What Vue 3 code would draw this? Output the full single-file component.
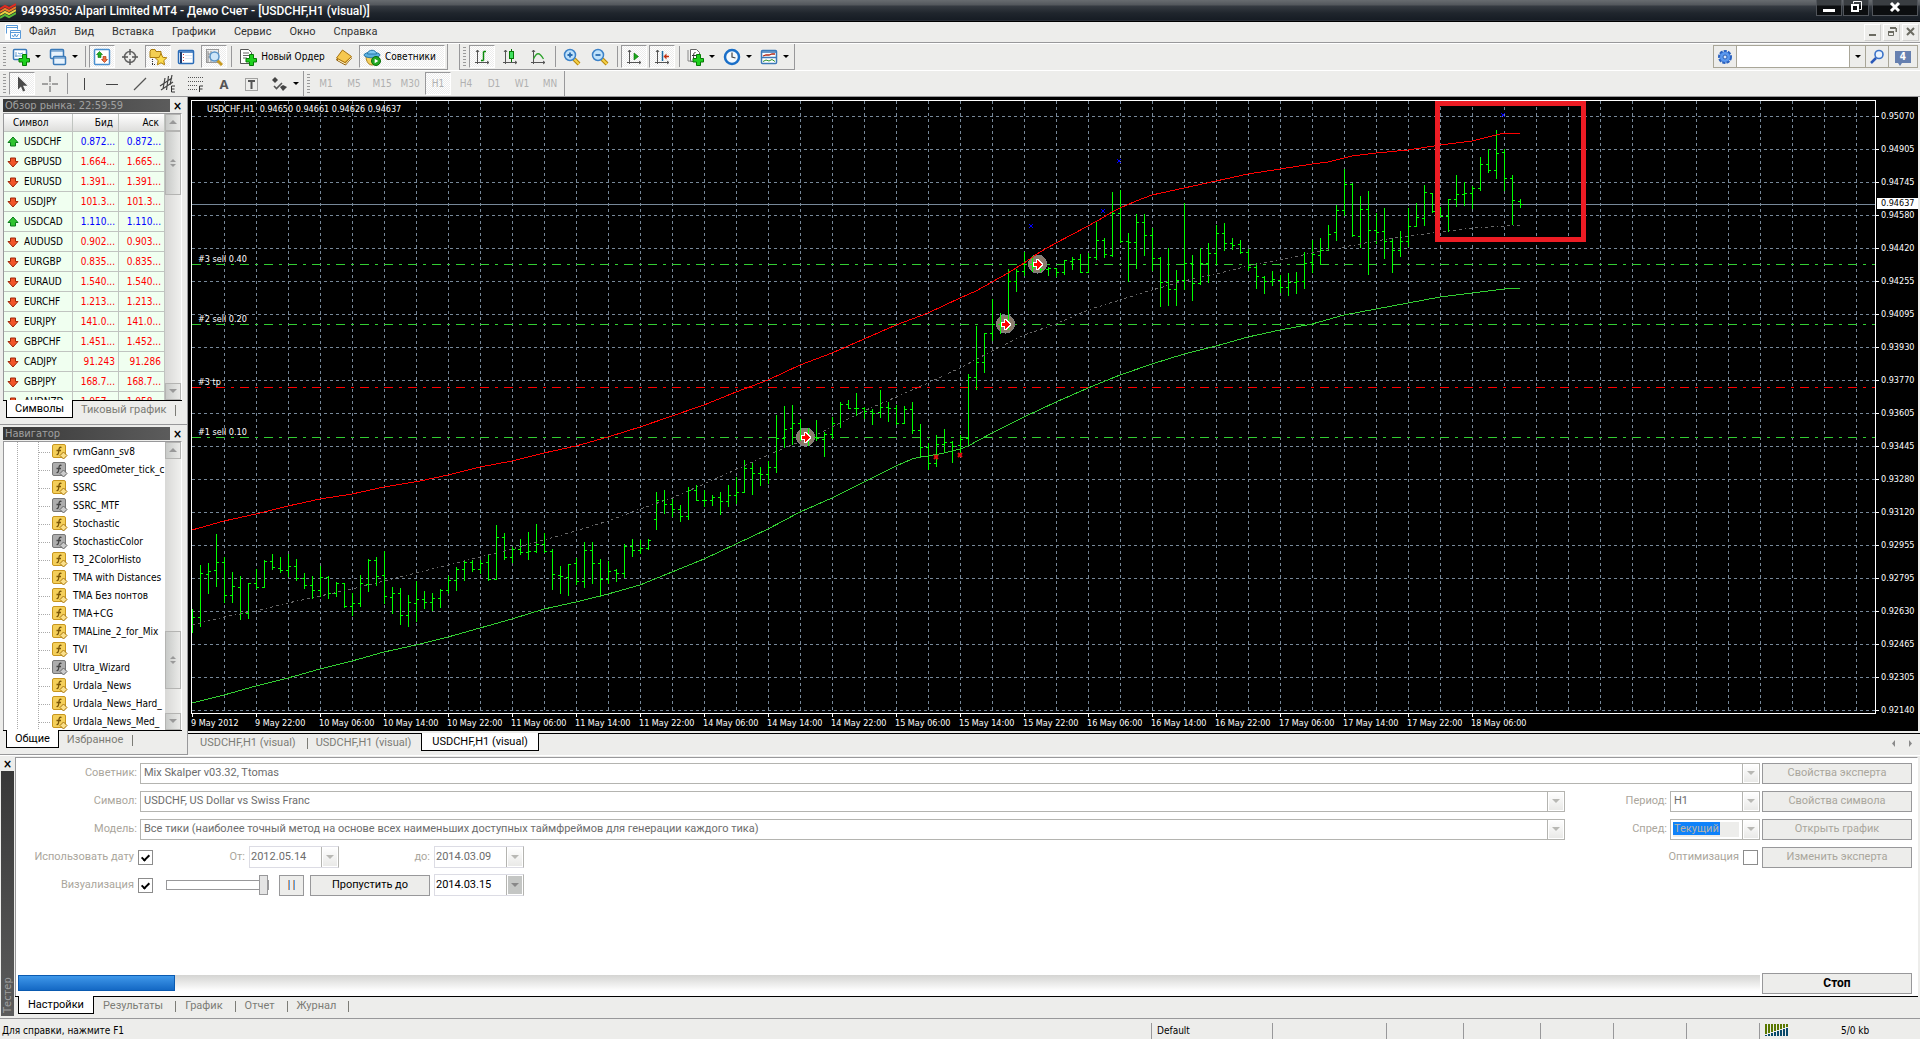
<script setup>
import { computed } from 'vue'

/* ---------- icon shapes, drawn on an 18 x 18 field ---------- */
const plus = '<path d="M10.5 6.5h4v4h3v3.500h-3v3.500h-4v-3.500h-3.500v-3.500h3.500z" fill="#1fd01f" stroke="#067a06"/>'
const axes = '<path d="M4.500 2v14M2 14.500h14M3 4l1.500-2L6 4M14 13l2 1.500-2 1.500" fill="none" stroke="#555"/>'
const lens = (sign) =>
  `<path d="M11 11l5 5" stroke="#b8860b" stroke-width="4"/><path d="M11 11l5 5" stroke="#f5d24a" stroke-width="2"/><circle cx="7" cy="7" r="5.500" fill="#bfe2fb" stroke="#3c82c8" stroke-width="1.500"/><path d="${sign}" stroke="#2a6cb0" stroke-width="1.800"/>`
const icons = {
  newChart: '<rect x="1.500" y="1.500" width="13" height="10" rx="1" fill="#fff" stroke="#3a7ab8" stroke-width="1.500"/><path d="M4 4v5M3 8h9M6 5l2 1 3-1" stroke="#6aa0d0" fill="none"/>' + plus,
  profiles: '<rect x="1.500" y="1.500" width="13" height="9" rx="1" fill="#e8f3fc" stroke="#3a7ab8" stroke-width="1.500"/><path d="M2 3h12" stroke="#3a7ab8"/><rect x="4.500" y="8.500" width="12" height="8" rx="1" fill="#e8f3fc" stroke="#3a7ab8" stroke-width="1.500"/><path d="M5 10h11" stroke="#3a7ab8"/>',
  market: '<rect x="1.500" y="1.500" width="15" height="15" rx="1" fill="#fff" stroke="#4a90d0" stroke-width="1.500"/><path d="M6.500 3.500l3 3h-1.500v3h-3v-3h-1.500z" fill="#20b020" stroke="#0a700a" stroke-width=".6"/><path d="M11.500 14.500l3-3h-1.500v-3h-3v3h-1.500z" fill="#f07040" stroke="#a02a00" stroke-width=".6"/>',
  target: '<circle cx="9" cy="9" r="5.500" fill="none" stroke="#666" stroke-width="1.500"/><path d="M9 1v6M9 11v6M1 9h6M11 9h6" stroke="#555" stroke-width="1.400"/>',
  star: '<path d="M1 3.500l1-2h4l1 2h5v6H1z" fill="#f3cf52" stroke="#a87c12"/><path d="M3.500 11v6M3 16.500h4" stroke="#333" stroke-dasharray="1 1"/><path d="M12 5.500l1.800 3.800 4 .5-3 2.800.8 4.200L12 14.800 8.400 16.800l.8-4.200-3-2.800 4-.5z" fill="#fbdc4e" stroke="#b07f0c"/>',
  terminal: '<rect x="1.500" y="2.500" width="15" height="13" rx="1" fill="#fff" stroke="#2a6cb8" stroke-width="1.500"/><path d="M2 4h14" stroke="#2a6cb8" stroke-width="1.500"/><path d="M4 4v11" stroke="#1a3c70" stroke-width="2"/><path d="M6.500 6v8" stroke="#c33" stroke-dasharray="1 2"/><path d="M8 7.500h7M8 10.500h7" stroke="#dde8f4"/>',
  tester: '<rect x="1.500" y="1.500" width="12" height="13" fill="#eee" stroke="#999"/><path d="M3 3v11M6 3v11M3 6h9M3 9h9" stroke="#888" fill="none"/><path d="M12 12l5 5" stroke="#c89a20" stroke-width="3"/><circle cx="9.500" cy="8.500" r="4.500" fill="#cfe6f8" stroke="#5a94c8" stroke-width="1.500"/>',
  order: '<path d="M1.500 1.500h8l3 3v11h-11z" fill="#fff" stroke="#555"/><path d="M4 5h6M4 7.500h6M4 10h4" stroke="#666"/>' + plus,
  book: '<path d="M1.500 12L7 3.500l9.500 6.500-6 7z" fill="#c88a18" stroke="#8a5a08"/><path d="M1.500 10L7.500 2l9 6.500-6.500 6z" fill="#f6c850" stroke="#a87412"/><path d="M3 12l7.500 4 5.500-6" stroke="#fff3c8" fill="none"/>',
  expert: '<path d="M3 8c0 6 3 9 6 9s6-3 6-9z" fill="#f6d060" stroke="#a8801a"/><ellipse cx="9" cy="7" rx="8" ry="2.800" fill="#5ab0e0" stroke="#2a78a8"/><path d="M4.500 6c0-5 9-5 9 0z" fill="#7cc8f0" stroke="#2a78a8"/><circle cx="13" cy="13" r="4.500" fill="#22a822" stroke="#0a700a"/><path d="M11.700 10.700v4.600l3.600-2.300z" fill="#fff"/>',
  bars: axes + '<path d="M10.500 3.500v9M10.500 3.500h2.500M8 12.500h2.500" stroke="#0a8a0a" stroke-width="1.500" fill="none"/>',
  candles: axes + '<path d="M10.500 1v13" stroke="#067006"/><rect x="8.500" y="3.500" width="4" height="7" fill="#3fe05f" stroke="#067a06"/>',
  line: axes + '<path d="M4.500 11c3-7 6-7 10 0" stroke="#2aa22a" stroke-width="1.300" fill="none"/>',
  zoomIn: lens('M4.500 7h5M7 4.500v5'),
  zoomOut: lens('M4.500 7h5'),
  scroll: axes + '<path d="M9 5l4.500 3.500L9 12z" fill="#18a818" stroke="#067006" stroke-width=".6"/>',
  shift: axes + '<path d="M9.500 3v10" stroke="#1a6aa0" stroke-width="1.500"/><path d="M16 8.500h-4" stroke="#c03010" stroke-width="1.500"/><path d="M13.500 5.500l-3 3 3 3z" fill="#c03010"/>',
  indicator: '<path d="M4.500 1.500h6l3 3v9h-9z" fill="#fff" stroke="#666"/><path d="M2 2v11h4" fill="none" stroke="#888"/><path d="M9.500 4.500c-2 0-2 1.500-2 8M6 7.500h4" stroke="#333" fill="none"/>' + plus,
  clock: '<circle cx="9" cy="9" r="7" fill="#f4f9fd" stroke="#1a6fc8" stroke-width="2.500"/><path d="M9 4.500V9l3.500 1" stroke="#444" fill="none" stroke-width="1.200"/>',
  template: '<rect x="1.500" y="2.500" width="15" height="13" rx="1" fill="#fff" stroke="#3a78b8" stroke-width="1.500"/><path d="M2 4h14M2 9.500h14" stroke="#3a78b8" stroke-width="1.500"/><path d="M3 8l3-1 3 0 3-1 3 0" stroke="#b02a1a" fill="none" stroke-width="1.300"/><path d="M3 13.500l3-1.500 3 1 3-1.500 3 2" stroke="#2a902a" fill="none"/>',
  cursor: '<path d="M5 1.500v13l3-3 2 5 2.200-1-2.200-4.700h4.500z" fill="#4a4a4a"/>',
  cross: '<path d="M9 1v6M9 11v6M1 9h6M11 9h6" stroke="#555"/><path d="M8.500 8.500h1v1h-1z" fill="#555"/>',
  vline: '<path d="M9.500 3v12" stroke="#444"/>',
  hline: '<path d="M3 9.500h12" stroke="#444"/>',
  trend: '<path d="M3 15L15 3" stroke="#555" stroke-width="1.300"/>',
  channel: '<path d="M1 11l12-8M2 15l12-8M6 3l-2 11M9.500 1l-2 14M13 0l-2 10" stroke="#444" stroke-width="1.200"/><path d="M16 11h-3.500v6h3.500M12.500 14h3" stroke="#333" fill="none"/>',
  fibo: '<path d="M1 2.500h15M1 6.500h15M1 10.500h9M1 14.500h9" stroke="#555" stroke-dasharray="1 1"/><path d="M16 11h-3.500v6M12.500 14h3" stroke="#333" fill="none"/>',
  letterBox: '<rect x="2.500" y="3.500" width="12" height="12" fill="none" stroke="#555" stroke-dasharray="1 1"/><path d="M5 6h7M8.500 6v8" stroke="#555" stroke-width="2"/>',
  arrows: '<path d="M2 5l3-3 3 3-3 3z" fill="#444"/><path d="M10 12l3-2 4 2-4 4z" fill="#444"/><path d="M4 11l2.500 2.500L12 8" stroke="#555" stroke-width="1.600" fill="none"/>',
}

const menu = ['Файл', 'Вид', 'Вставка', 'Графики', 'Сервис', 'Окно', 'Справка']

const standardBar = [
  { icon: 'newChart', drop: true },
  { icon: 'profiles', drop: true },
  { sep: true },
  { icon: 'market', on: true },
  { icon: 'target' },
  { icon: 'star', on: true },
  { icon: 'terminal' },
  { icon: 'tester', on: true },
  { sep: true },
  { icon: 'order', label: 'Новый Ордер' },
  { icon: 'book' },
  { icon: 'expert', label: 'Советники', on: true },
]
const chartBar = [
  { icon: 'bars', on: true },
  { icon: 'candles' },
  { icon: 'line' },
  { sep: true },
  { icon: 'zoomIn' },
  { icon: 'zoomOut' },
  { sep: true },
  { icon: 'scroll', on: true },
  { icon: 'shift', on: true },
  { sep: true },
  { icon: 'indicator', drop: true },
  { icon: 'clock', drop: true },
  { icon: 'template', drop: true },
]
const drawBar = [
  { icon: 'cursor', on: true },
  { icon: 'cross' },
  { sep: true },
  { icon: 'vline' },
  { icon: 'hline' },
  { icon: 'trend' },
  { icon: 'channel' },
  { icon: 'fibo' },
  { glyph: 'A' },
  { icon: 'letterBox' },
  { icon: 'arrows', drop: true },
]
const periodBar = ['M1', 'M5', 'M15', 'M30', 'H1', 'H4', 'D1', 'W1', 'MN'].map((p) => ({ period: p, on: p === 'H1' }))
const topBars = [standardBar, chartBar]
const lowBars = [drawBar, periodBar]

const quotes = [
  ['USDCHF', '0.872...', '0.872...', true],
  ['GBPUSD', '1.664...', '1.665...', false],
  ['EURUSD', '1.391...', '1.391...', false],
  ['USDJPY', '101.3...', '101.3...', false],
  ['USDCAD', '1.110...', '1.110...', true],
  ['AUDUSD', '0.902...', '0.903...', false],
  ['EURGBP', '0.835...', '0.835...', false],
  ['EURAUD', '1.540...', '1.540...', false],
  ['EURCHF', '1.213...', '1.213...', false],
  ['EURJPY', '141.0...', '141.0...', false],
  ['GBPCHF', '1.451...', '1.452...', false],
  ['CADJPY', '91.243', '91.286', false],
  ['GBPJPY', '168.7...', '168.7...', false],
  ['AUDNZD', '1.057...', '1.058...', false],
]

const indicators = [
  ['rvmGann_sv8', 1], ['speedOmeter_tick_c', 0], ['SSRC', 1], ['SSRC_MTF', 0],
  ['Stochastic', 1], ['StochasticColor', 0], ['T3_2ColorHisto', 1], ['TMA with Distances', 1],
  ['TMA Без понтов', 1], ['TMA+CG', 1], ['TMALine_2_for_Mix', 1], ['TVI', 1],
  ['Ultra_Wizard', 0], ['Urdala_News', 1], ['Urdala_News_Hard_', 1], ['Urdala_News_Med_', 1],
]

const prices = [
  '0.95070', '0.94905', '0.94745', '0.94580', '0.94420', '0.94255', '0.94095', '0.93930', '0.93770', '0.93605',
  '0.93445', '0.93280', '0.93120', '0.92955', '0.92795', '0.92630', '0.92465', '0.92305', '0.92140',
]
const times = [
  '9 May 2012', '9 May 22:00', '10 May 06:00', '10 May 14:00', '10 May 22:00', '11 May 06:00', '11 May 14:00',
  '11 May 22:00', '14 May 06:00', '14 May 14:00', '14 May 22:00', '15 May 06:00', '15 May 14:00', '15 May 22:00',
  '16 May 06:00', '16 May 14:00', '16 May 22:00', '17 May 06:00', '17 May 14:00', '17 May 22:00', '18 May 06:00',
]

/* ---------- chart series: high, low, open, close for each hour ---------- */
const LEFT = 192
const TOP = 101
const STEP = 8
const ohlc = `609 632 617 617|565 626 617 573|563 593 574 571|534 586 570 562|557 602 562 595|572 602 595 586|576 619 587 613|583 618 613 583
569 588 583 587|560 587 587 561|554 569 561 567|557 572 568 570|554 576 570 566|559 580 566 578|573 588 578 585|576 598 585 590
566 596 590 577|576 598 577 593|582 596 593 583|583 607 583 606|593 615 606 603|575 606 603 583|559 591 584 560|557 585 560 576
551 603 575 596|587 613 597 593|588 624 593 615|595 626 615 602|581 621 603 599|591 608 599 602|593 610 602 598|589 607 598 590
576 593 590 580|567 590 580 569|561 580 569 562|560 571 562 569|560 573 569 563|554 580 562 579|525 579 579 537|533 559 537 557
547 562 557 549|539 554 549 552|532 559 552 551|524 552 551 544|533 552 544 551|549 589 551 574|566 593 575 576|564 595 577 564
558 584 563 581|542 587 581 550|542 583 550 563|559 596 563 579|561 583 579 571|569 581 570 573|544 577 573 546|539 556 546 550
540 553 550 548|539 549 548 540|492 529 519 500|490 513 500 504|499 516 504 509|505 521 509 516|487 519 516 490|485 500 490 500
490 506 500 500|495 505 500 497|492 514 497 501|485 506 501 495|477 503 495 492|460 492 492 468|463 494 468 473|467 485 473 474
461 483 474 467|415 472 467 438|406 447 438 429|405 444 428 423|419 440 423 437|428 445 437 437|420 440 437 438|432 456 439 434
417 438 434 423|402 427 423 404|400 408 404 408|393 415 408 408|407 418 408 411|409 424 411 413|390 417 412 407|402 421 407 408
405 424 408 423|406 423 423 409|402 433 409 430|424 457 430 447|443 469 447 463|435 466 463 444|429 451 444 442|441 462 442 446
435 452 445 439|374 444 438 377|326 389 377 362|333 372 362 333|299 340 333 324|313 333 324 324|269 329 324 281|269 291 281 271
252 275 271 264|256 271 264 267|264 271 267 269|267 275 269 268|268 276 268 272|260 274 272 260|257 269 261 259|254 272 259 272
253 272 272 257|221 259 257 240|238 257 240 254|192 256 255 213|190 242 213 241|233 281 241 242|214 268 242 222|214 255 222 235
228 270 235 258|257 306 258 282|248 305 282 289|270 305 289 280|203 289 280 263|255 300 263 283|248 284 283 263|243 282 263 253
225 264 253 233|223 250 233 243|238 249 243 245|240 253 244 252|249 270 252 267|263 288 267 276|276 293 277 281|271 285 281 279
275 292 280 287|273 295 287 282|272 293 282 281|252 288 281 263|240 272 262 254|238 264 255 250|225 250 250 234|205 240 232 210
169 215 210 184|183 236 184 235|196 247 236 209|191 274 209 230|213 243 230 232|208 258 231 241|239 272 241 250|231 256 250 241
208 246 241 226|203 226 226 217|185 225 218 192|193 212 193 211|207 216 211 216|199 231 216 199|175 206 199 194|182 205 194 193
186 208 193 188|157 190 188 164|149 172 164 170|130 178 170 153|149 190 152 178|175 224 178 200|199 207 201 204`
const barPath = computed(() =>
  ohlc
    .split(/[|\n]/)
    .map((row, i) => {
      const [h, l, o, c] = row.split(' ').map(Number)
      const x = LEFT + i * STEP
      return `M${x} ${h}h1V${l + 1}h-1zM${x - 2} ${o}h2v1h-2zM${x + 1} ${c}h2v1h-2z`
    })
    .join('')
)
const upper = '192,530 224,521 256,514 288,506 320,499 352,494 384,487 420,481 448,475 480,467 512,461 544,453 576,446 608,437 640,427 672,416 704,405 736,392 768,380 800,365 832,353 864,339 896,325 928,313 960,298 976,291 992,282 1008,273 1024,263 1040,252 1056,243 1088,226 1104,217 1112,212 1120,208 1136,201 1152,195 1184,188 1216,181 1248,174 1280,169 1312,164 1328,162 1344,158 1352,156 1376,153 1408,150 1440,145 1472,141 1488,137 1500,134 1504,133 1520,133'
const lower = '192,703 224,695 256,686 288,678 320,669 352,661 384,652 416,645 448,637 480,628 512,619 544,609 576,602 608,594 640,585 672,572 704,559 736,544 768,529 800,512 832,498 864,482 896,466 912,459 920,457 928,456 944,453 952,451 960,449 968,446 992,433 1024,417 1056,402 1088,388 1120,375 1152,364 1168,359 1184,354 1216,346 1248,337 1280,330 1312,324 1344,315 1376,309 1408,303 1440,297 1472,293 1504,289 1520,288'
const middle = '192,625 224,617 256,611 288,603 320,596 352,589 384,581 416,573 448,565 480,557 512,549 544,540 576,531 608,521 640,509 672,498 704,484 768,455 816,435 832,427 864,411 896,397 928,383 960,368 992,351 1024,335 1056,324 1088,310 1120,300 1152,290 1184,281 1216,274 1248,266 1280,260 1312,253 1344,247 1376,241 1408,236 1440,232 1472,228 1504,226 1520,225'

const orders = [
  { y: 264, text: '#3 sell 0.40', tp: false },
  { y: 324, text: '#2 sell 0.20', tp: false },
  { y: 387, text: '#3 tp', tp: true },
  { y: 437, text: '#1 sell 0.10', tp: false },
]
const entries = [[1037, 264], [1005, 324], [805, 437]]
const blueMarks = [[1031, 226], [1103, 211], [1119, 161], [1503, 115]]
const redMarks = [[936, 457], [960, 455]]

const chartTabs = ['USDCHF,H1 (visual)', 'USDCHF,H1 (visual)', 'USDCHF,H1 (visual)']
const testerTabs = ['Настройки', 'Результаты', 'График', 'Отчет', 'Журнал']
</script>

<template>
  <div class="app">
    <header class="titlebar">
      <svg class="logo" width="16" height="16" viewBox="0 0 16 16" fill="none" stroke-width="2">
        <path d="M0 6l5-3 4 2 7-4" stroke="#e02a20" />
        <path d="M0 9l5-3 4 2 7-4" stroke="#f07a28" />
        <path d="M0 12l5-3 4 2 7-4" stroke="#e8d040" />
        <path d="M0 15l5-3 4 2 7-4" stroke="#58b838" />
      </svg>
      <h1>9499350: Alpari Limited MT4 - Демо Счет - [USDCHF,H1 (visual)]</h1>
      <div class="winbtns">
        <button aria-label="Свернуть"><svg width="12" height="12"><path d="M0 8h12v3H0z" fill="#fff" /></svg></button>
        <button aria-label="Восстановить">
          <svg width="12" height="12" fill="none" stroke="#fff"><path d="M3.500 2.500v-2h8v8h-2" /><path d="M2 4h6v6H2z" stroke-width="2" /></svg>
        </button>
        <button class="close" aria-label="Закрыть"><svg width="12" height="12"><path d="M2 2l8 8M10 2l-8 8" stroke="#fff" stroke-width="3" /></svg></button>
      </div>
    </header>

    <nav class="menubar">
      <svg width="16" height="16" viewBox="0 0 16 16">
        <path d="M0 0h16v16H0z" fill="#fff" />
        <path d="M1.500 9.500v-8h11v4M1 3.500h12M5.500 6.500h10v8h-10zM5 8.500h11" fill="none" stroke="#5a9ad8" />
        <path d="M7 11l1.500 2L10 10l1.500 3 2-3" fill="none" stroke="#5a9ad8" />
      </svg>
      <a v-for="m in menu" :key="m" href="#">{{ m }}</a>
      <div class="mdi">
        <button aria-label="Свернуть окно"><svg width="10" height="10"><path d="M1 7h7v2H1z" fill="#6b6b62" /></svg></button>
        <button aria-label="Восстановить окно"><svg width="10" height="10" fill="none" stroke="#6b6b62"><path d="M3 1h6M9.500 1v4M1 5h6" stroke-width="2" /><path d="M1.500 4.500h5v4h-5z" /></svg></button>
        <button aria-label="Закрыть окно"><svg width="10" height="10"><path d="M1 1l7 7M8 1L1 8" stroke="#6b6b62" stroke-width="2" /></svg></button>
      </div>
    </nav>

    <div v-for="(bars, r) in [topBars, lowBars]" :key="r" class="toolrow" :class="{ second: r === 1 }">
      <div v-for="(bar, b) in bars" :key="b" class="toolbar" role="toolbar">
        <i class="grip"></i>
        <template v-for="(t, i) in bar" :key="i">
          <i v-if="t.sep" class="sep"></i>
          <button v-else class="tool" :class="{ on: t.on, drop: t.drop, wide: t.label }" :aria-label="t.label || t.period || t.glyph || t.icon">
            <svg v-if="t.icon" width="18" height="18" viewBox="0 0 18 18" v-html="icons[t.icon]"></svg>
            <span v-if="t.label">{{ t.label }}</span>
            <b v-if="t.glyph">{{ t.glyph }}</b>
            <span v-if="t.period" class="period">{{ t.period }}</span>
            <i v-if="t.drop" class="caret"></i>
          </button>
        </template>
      </div>
      <form v-if="r === 0" class="search" @submit.prevent>
        <button aria-label="Настройки поиска">
          <svg width="16" height="16" viewBox="0 0 16 16">
            <circle cx="8" cy="8" r="5.500" fill="#3a7ad8" stroke="#2a62c0" stroke-width="3" stroke-dasharray="3 1" />
            <circle cx="8" cy="8" r="5" fill="#5a98ee" /><circle cx="8" cy="8" r="2" fill="#dce9fb" stroke="#2a5cb0" />
          </svg>
        </button>
        <input type="text" aria-label="Поиск" />
        <button class="narrow" aria-label="Список"><i class="caret"></i></button>
        <button aria-label="Найти">
          <svg width="15" height="15" viewBox="0 0 15 15" fill="none"><circle cx="9" cy="5.500" r="4" fill="#eaf3fe" stroke="#3a72c8" stroke-width="1.600" /><path d="M6 9l-5 5" stroke="#2a58b8" stroke-width="2.500" /></svg>
        </button>
        <button class="chat" aria-label="Сообщения"><span>4</span></button>
      </form>
    </div>

    <main class="work">
      <aside class="side">
        <section class="panel market">
          <header class="cap"><h2>Обзор рынка: 22:59:59</h2><button aria-label="Закрыть панель">×</button></header>
          <div class="scrollbox">
            <div class="view">
              <table>
                <thead>
                  <tr><th class="sym">Символ</th><th>Бид</th><th>Аск</th></tr>
                </thead>
                <tbody>
                  <tr v-for="q in quotes" :key="q[0]" :class="q[3] ? 'up' : 'down'">
                    <td class="sym">
                      <svg width="12" height="12" viewBox="0 0 12 12">
                        <path v-if="q[3]" d="M6 1l5 5.500H8.500V10h-5V6.500H1z" fill="#2fc42f" stroke="#0a7a1a" />
                        <path v-else d="M6 11L1 5.500h2.500V2h5v3.500H11z" fill="#f0562a" stroke="#a02808" />
                      </svg>{{ q[0] }}
                    </td>
                    <td>{{ q[1] }}</td>
                    <td>{{ q[2] }}</td>
                  </tr>
                </tbody>
              </table>
            </div>
            <div class="vscroll">
              <i class="arrow up"></i><i class="thumb first"></i><i class="track"></i><i class="arrow dn"></i>
            </div>
          </div>
          <div class="tabs"><button class="active">Символы</button><button>Тиковый график</button></div>
        </section>

        <section class="panel navigator">
          <header class="cap"><h2>Навигатор</h2><button aria-label="Закрыть панель">×</button></header>
          <div class="scrollbox">
            <ul class="view tree">
              <li v-for="n in indicators" :key="n[0]">
                <svg width="16" height="16" viewBox="0 0 16 16">
                  <rect x=".5" y=".5" width="13" height="13" rx="1.500" :fill="n[1] ? '#f4cf5a' : '#adadad'" :stroke="n[1] ? '#c8961e' : '#777'" />
                  <path d="M9.500 3.500c-2-1-2.500 1-2.700 3.500S6 11 4.500 10.500M4.500 6.500h4.500" fill="none" :stroke="n[1] ? '#7a5608' : '#444'" stroke-width="1.300" />
                  <path d="M11.500 8l3.500 3.500-3.500 3.500L8 11.500z" :fill="n[1] ? '#fbe08a' : '#ccc'" :stroke="n[1] ? '#a87610' : '#666'" />
                </svg>
                <span>{{ n[0] }}</span>
              </li>
            </ul>
            <div class="vscroll">
              <i class="arrow up"></i><i class="track"></i><i class="thumb second"></i><i class="track short"></i><i class="arrow dn"></i>
            </div>
          </div>
          <div class="tabs"><button class="active">Общие</button><button>Избранное</button></div>
        </section>
      </aside>

      <section class="charts">
        <div class="chart">
          <div class="plot">
            <svg width="100%" height="100%" shape-rendering="crispEdges">
              <g :transform="`translate(${-LEFT},${-TOP})`">
                <g stroke="#778899" stroke-dasharray="3 3">
                  <line v-for="k in 80" :key="'v' + k" :x1="LEFT + k * 32 + 0.5" :x2="LEFT + k * 32 + 0.5" :y1="TOP" y2="3000" />
                  <line v-for="(p, k) in prices" :key="p" :x1="LEFT" x2="4000" :y1="116.5 + k * 33" :y2="116.5 + k * 33" />
                </g>
                <line :x1="LEFT" x2="4000" y1="204.5" y2="204.5" stroke="#778899" />
                <line v-for="o in orders" :key="o.text" :x1="LEFT" x2="4000" :y1="o.y + 0.5" :y2="o.y + 0.5" :stroke="o.tp ? '#f00' : '#32cd32'" stroke-dasharray="9 6 3 6" />
                <circle v-for="e in entries" :key="'c' + e[0]" :cx="e[0] + 0.5" :cy="e[1]" r="9" fill="#8b7b6b" stroke="#808080" />
                <path :d="barPath" fill="#0f0" />
                <g fill="none">
                  <polyline :points="middle" stroke="#696969" stroke-dasharray="3 3 3 3 1 3" />
                  <polyline :points="upper" stroke="#f00" />
                  <polyline :points="lower" stroke="#32cd32" />
                </g>
                <g v-for="e in entries" :key="'a' + e[0]" :transform="`translate(${e[0]},${e[1]})`">
                  <path d="M-4-2h3v-3h2l5 5v1l-5 5h-2v-3h-3z" fill="#fff" />
                  <path d="M-3-1h3v-3l5 4v1l-5 4v-3h-3z" fill="#f00" />
                </g>
                <g shape-rendering="auto">
                  <path v-for="m in blueMarks" :key="'b' + m[0]" :d="`M${m[0] - 2} ${m[1] - 2}l4 4M${m[0] + 2} ${m[1] - 2}l-4 4`" stroke="#00f" />
                  <path v-for="m in redMarks" :key="'r' + m[0]" :d="`M${m[0] - 2} ${m[1] - 2}l4 4M${m[0] + 2} ${m[1] - 2}l-4 4`" stroke="#e01010" stroke-width="2" />
                </g>
                <rect x="1437.5" y="103.5" width="146" height="136" fill="none" stroke="#ed1c24" stroke-width="5" />
              </g>
              <text x="15" y="11">USDCHF,H1&nbsp; 0.94650 0.94661 0.94626 0.94637</text>
              <text v-for="o in orders" :key="'t' + o.text" x="6" :y="o.y - TOP - 2">{{ o.text }}</text>
            </svg>
          </div>
          <div class="prices">
            <span v-for="p in prices" :key="p">{{ p }}</span>
            <output>0.94637</output>
          </div>
          <div class="times"><span v-for="t in times" :key="t">{{ t }}</span></div>
        </div>
        <div class="tabs charttabs">
          <button v-for="(t, i) in chartTabs" :key="i" :class="{ active: i === 2 }">{{ t }}</button>
          <svg width="22" height="8" viewBox="0 0 22 8" fill="#8a8a8a"><path d="M4 0v7L1 3.500zM18 0v7l3-3.500z" /></svg>
        </div>
      </section>
    </main>

    <section class="tester">
      <div class="rail"><button aria-label="Закрыть тестер">×</button><span>Тестер</span></div>
      <div class="body">
        <form class="form" @submit.prevent>
          <div class="row">
            <label for="expert" class="lab">Советник:</label>
            <div class="combo grow"><select id="expert" disabled><option>Mix Skalper v03.32, Ttomas</option></select><i></i></div>
            <button class="btn" disabled>Свойства эксперта</button>
          </div>
          <div class="row">
            <label for="symbol" class="lab">Символ:</label>
            <div class="combo grow"><select id="symbol" disabled><option>USDCHF, US Dollar vs Swiss Franc</option></select><i></i></div>
            <label for="period" class="lab mid">Период:</label>
            <div class="combo small"><select id="period" disabled><option>H1</option></select><i></i></div>
            <button class="btn" disabled>Свойства символа</button>
          </div>
          <div class="row">
            <label for="model" class="lab">Модель:</label>
            <div class="combo grow">
              <select id="model" disabled><option>Все тики (наиболее точный метод на основе всех наименьших доступных таймфреймов для генерации каждого тика)</option></select><i></i>
            </div>
            <label for="spread" class="lab mid">Спред:</label>
            <div class="combo small picked"><div><select id="spread" disabled><option>Текущий</option></select></div><i></i></div>
            <button class="btn" disabled>Открыть график</button>
          </div>
          <div class="row">
            <label for="usedate" class="lab tick">Использовать дату</label>
            <input id="usedate" type="checkbox" checked />
            <label for="from" class="lab from">От:</label>
            <div class="date off"><input id="from" type="text" value="2012.05.14" disabled /><i></i></div>
            <label for="to" class="lab to">до:</label>
            <div class="date off"><input id="to" type="text" value="2014.03.09" disabled /><i></i></div>
            <label for="optim" class="lab push">Оптимизация</label>
            <input id="optim" type="checkbox" />
            <button class="btn" disabled>Изменить эксперта</button>
          </div>
          <div class="row">
            <label for="visual" class="lab tick">Визуализация</label>
            <input id="visual" type="checkbox" checked />
            <input class="speed" type="range" min="0" max="100" value="100" aria-label="Скорость" />
            <button class="btn pause" aria-label="Пауза"><i></i><i></i></button>
            <button class="btn skip">Пропустить до</button>
            <div class="date"><input type="text" value="2014.03.15" aria-label="Дата" /><i></i></div>
          </div>
          <div class="row foot">
            <progress value="9" max="100" aria-label="Ход теста"></progress>
            <button class="btn stop">Стоп</button>
          </div>
        </form>
        <div class="tabs"><button v-for="(t, i) in testerTabs" :key="t" :class="{ active: i === 0 }">{{ t }}</button></div>
      </div>
    </section>

    <footer class="status">
      <span class="hint">Для справки, нажмите F1</span>
      <span class="w1">Default</span><span class="w2"></span><span class="w3"></span><span class="w3"></span><span class="w4"></span><span class="w4"></span><span class="w4"></span>
      <span class="net">
        <svg width="24" height="13" shape-rendering="crispEdges">
          <template v-for="k in 8" :key="k">
            <rect :x="(k - 1) * 3" y="0" width="2" :height="11 - k" fill="#5a7800" />
            <rect :x="(k - 1) * 3" :y="12 - k" width="2" :height="k" fill="#0a4a6a" />
          </template>
        </svg>
        <em>5/0 kb</em>
      </span>
    </footer>
  </div>
</template>

<style>
body {
  margin: 0;
  background: #ededeb;
}
</style>

<style scoped>
.app {
  --face: #ededeb;
  --line: #98989a;
  --small: 'DejaVu Sans Condensed', 'DejaVu Sans', sans-serif;
  display: flex;
  flex-direction: column;
  height: 100vh;
  min-height: 900px;
  overflow: hidden;
  background: var(--face);
  color: #000;
  font: 11px/14px Roboto, 'Liberation Sans', sans-serif;
}
.app * {
  box-sizing: border-box;
}
button,
input,
select {
  font: inherit;
  color: inherit;
  margin: 0;
  padding: 0;
  border: 0;
  border-radius: 0;
  background: none;
}
svg {
  display: block;
  flex: none;
}

/* title */
.titlebar {
  display: flex;
  flex: none;
  height: 22px;
  border-bottom: 1px solid #000;
  background: linear-gradient(#686c70 0, #53575c 5px, #363b42 6px, #20262d 13px, #161c24 20px, #3a3e46 21px);
}
.logo {
  margin-top: 3px;
}
.titlebar h1 {
  flex: 1;
  margin: 0 0 0 5px;
  color: #fff;
  font: 500 12px/22px Roboto, 'Open Sans', sans-serif;
}
.winbtns {
  display: flex;
  align-items: flex-start;
  gap: 1px;
  padding-right: 2px;
}
.winbtns button {
  display: flex;
  justify-content: center;
  width: 26px;
  height: 16px;
  padding-top: 1px;
  border: 1px solid #50545a;
  border-top: 0;
  background: linear-gradient(#3a3e42 0 5px, #0c0e10 6px);
}
.winbtns .close {
  width: 46px;
  margin-left: 2px;
}

/* menu */
.menubar {
  display: flex;
  flex: none;
  align-items: center;
  height: 21px;
  padding: 0 1px 0 5px;
  border-bottom: 1px solid var(--line);
}
.menubar > svg {
  margin-right: 8px;
}
.menubar a {
  margin-right: 18px;
  color: #333;
  text-decoration: none;
}
.mdi {
  display: flex;
  gap: 2px;
  margin-left: auto;
}
.mdi button {
  display: flex;
  align-items: center;
  justify-content: center;
  width: 17px;
  height: 17px;
  border: 1px solid #fff;
  border-right-color: #cfcfcd;
  border-bottom-color: #cfcfcd;
}

/* toolbars */
.toolrow {
  display: flex;
  flex: none;
  height: 27px;
  border-top: 1px solid #fff;
}
.toolrow.second {
  height: 26px;
}
.toolbar {
  display: flex;
  align-items: center;
  padding: 0 1px 0 3px;
  border-right: 1px solid var(--line);
  border-bottom: 1px solid var(--line);
}
.toolrow:not(.second) .toolbar + .toolbar {
  margin-left: 11px;
  border-left: 1px solid var(--line);
}
.toolrow.second .toolbar {
  border-bottom: 0;
  padding-right: 0;
}
.grip {
  width: 3px;
  height: 20px;
  margin-right: 2px;
  background: repeating-linear-gradient(#9a9a9a 0 1px, transparent 1px 3px);
}
.sep {
  width: 1px;
  height: 21px;
  margin: 0 2px 0 3px;
  background: var(--line);
}
.tool {
  display: flex;
  align-items: center;
  justify-content: center;
  width: 26px;
  height: 23px;
  margin: 0 1px;
  border: 1px solid transparent;
}
.tool.drop {
  width: 35px;
  gap: 5px;
}
.tool.wide {
  width: 94px;
  gap: 4px;
  font: 10px/14px var(--small);
  white-space: nowrap;
}
.tool.wide.on {
  width: 86px;
  justify-content: flex-start;
  padding-left: 3px;
}
.tool.on {
  border-color: var(--line) #fff #fff var(--line);
  background: repeating-conic-gradient(#fff 0 25%, #ececec 0 50%) 0 0 / 2px 2px;
}
.tool b {
  color: #555;
  font: bold 13px/14px 'Noto Sans', sans-serif;
}
.period {
  color: #b0b0b0;
  font: 10px/14px var(--small);
}
.caret {
  width: 0;
  height: 0;
  border: 3px solid transparent;
  border-top-color: #000;
  border-bottom: 0;
}
.search {
  display: flex;
  flex: none;
  height: 23px;
  margin: 1px 2px 0 auto;
  border: 1px solid #a9a698;
}
.search button {
  display: flex;
  align-items: center;
  justify-content: center;
  width: 22px;
}
.search input {
  width: 114px;
  border: 1px solid #a9a698;
  border-width: 0 1px;
  background: #fff;
}
.search .narrow {
  width: 16px;
  border-right: 1px solid #a9a698;
}
.search .chat {
  width: 29px;
  border-left: 1px solid #a9a698;
}
.chat span {
  position: relative;
  width: 16px;
  height: 12px;
  background: #6680b0;
  color: #fff;
  font: bold 10px/12px var(--small);
}
.chat span::after {
  content: '';
  position: absolute;
  left: 3px;
  top: 12px;
  border: 2px solid transparent;
  border-top: 3px solid #6680b0;
}

/* work area */
.work {
  display: flex;
  flex: 1;
  min-height: 0;
  border-top: 1px solid var(--line);
}
.side {
  display: flex;
  flex: none;
  flex-direction: column;
  width: 188px;
  border-right: 1px solid var(--line);
}
.panel {
  display: flex;
  flex-direction: column;
  padding: 2px 5px 5px 3px;
  border-bottom: 1px solid var(--line);
}
.market {
  flex: none;
  height: 328px;
}
.navigator {
  flex: 1;
  min-height: 0;
}
.cap {
  display: flex;
  flex: none;
  margin-right: -3px;
}
.cap h2 {
  flex: 1;
  margin: 0;
  padding-left: 2px;
  background: linear-gradient(90deg, #383838, #5c5c5c);
  color: #a0a0a0;
  font: 11px/13px 'DejaVu Sans Condensed', sans-serif;
}
.cap button {
  width: 15px;
  font: bold 12px/12px var(--small);
}
.scrollbox {
  display: flex;
  flex: 1;
  min-height: 0;
  margin-top: 1px;
  border: 1px solid var(--line);
  border-right-color: #fff;
  border-bottom: 0;
}
.view {
  flex: 1;
  min-width: 0;
  overflow: hidden;
}
.vscroll {
  display: flex;
  flex: none;
  flex-direction: column;
  width: 16px;
  background: linear-gradient(90deg, #d8d8d6, #f0f0ee);
}
.vscroll i {
  position: relative;
  flex: none;
}
.vscroll .track {
  flex: 1;
}
.vscroll .track.short {
  flex: 0 0 24px;
}
.vscroll .arrow,
.vscroll .thumb {
  height: 17px;
  border: 1px solid #b4b4b2;
  background: linear-gradient(90deg, #c8cac8, #eaeae8);
}
.vscroll .thumb.first {
  height: 64px;
}
.vscroll .thumb.second {
  height: 58px;
}
.arrow::after,
.thumb::after,
.thumb::before {
  content: '';
  position: absolute;
  left: 3px;
  top: 5px;
  border: 4px solid transparent;
}
.arrow.up::after {
  border-top: 0;
  border-bottom-color: #999;
}
.arrow.dn::after {
  border-bottom: 0;
  border-top-color: #999;
}
.thumb::before,
.thumb::after {
  left: 4px;
  top: 50%;
  border-width: 3px;
}
.thumb::before {
  margin-top: -4px;
  border-top: 0;
  border-bottom-color: #999;
}
.thumb::after {
  margin-top: 1px;
  border-bottom: 0;
  border-top-color: #999;
}
table {
  width: 100%;
  table-layout: fixed;
  border-collapse: separate;
  border-spacing: 0;
  background: #f0fff0;
  font: 10px/14px var(--small);
}
th,
td {
  height: 20px;
  padding: 0 3px;
  overflow: hidden;
  border-right: 1px solid #c0c4c0;
  border-bottom: 1px solid #c0c4c0;
  font-weight: normal;
  text-align: right;
  white-space: nowrap;
}
th {
  height: 18px;
  padding-right: 5px;
  background: linear-gradient(#fff, #dededc);
}
.sym {
  width: 69px;
  text-align: left;
}
th.sym {
  padding-left: 9px;
}
td svg {
  display: inline-block;
  margin-right: 5px;
  vertical-align: middle;
}
.up td {
  color: #00f;
}
.down td {
  color: #f00;
}
td.sym {
  color: #000;
}
.tree {
  margin: 0;
  padding: 1px 0 0;
  list-style: none;
  background: linear-gradient(#aaa 50%, transparent 0) 13px 0 / 1px 2px repeat-y,
    linear-gradient(#aaa 50%, transparent 0) 34px 0 / 1px 2px repeat-y, #fff;
}
.tree li {
  display: flex;
  align-items: center;
  height: 18px;
  padding-left: 48px;
  font: 10px/14px var(--small);
  white-space: nowrap;
}
.tree li::before {
  content: '';
  width: 11px;
  height: 1px;
  margin: 1px 2px 0 -13px;
  background: linear-gradient(90deg, #aaa 50%, transparent 0) 0 0 / 2px 1px;
}
.tree span {
  margin-left: 5px;
}

/* shared bottom tabs */
.tabs {
  display: flex;
  flex: none;
  height: 19px;
  padding-left: 3px;
  border-top: 1px solid #000;
}
.tabs button {
  position: relative;
  height: 17px;
  padding: 0 8px;
  color: #7c7c76;
  font: 11px/16px Roboto, sans-serif;
  white-space: nowrap;
}
.tabs button:not(.active)::after {
  content: '';
  position: absolute;
  right: -2px;
  top: 4px;
  height: 11px;
  border-right: 1px solid #7c7c76;
}
.tabs .active {
  height: 18px;
  margin-top: -1px;
  border: 1px solid #000;
  border-top: 0;
  background: #fff;
  color: #000;
}

/* chart */
.charts {
  display: flex;
  flex: 1;
  flex-direction: column;
  min-width: 0;
}
.chart {
  display: grid;
  flex: 1;
  grid-template: minmax(0, 1fr) 17px / minmax(0, 1fr) 42px;
  min-height: 0;
  margin-right: 2px;
  padding: 3px 0 0 3px;
  background: #000;
  color: #fff;
  font: 9px/12px var(--small);
}
.plot {
  overflow: hidden;
  border: 1px solid #fff;
}
.plot text {
  fill: #fff;
  font: 9px var(--small);
}
.prices {
  position: relative;
  overflow: hidden;
}
.prices span {
  display: block;
  height: 33px;
  padding-left: 5px;
  line-height: 32px;
  background: linear-gradient(#fff, #fff) 0 16px / 3px 1px no-repeat;
}
.prices output {
  position: absolute;
  left: 1px;
  right: 0;
  top: 98px;
  height: 11px;
  padding-left: 4px;
  background: #fff;
  color: #000;
  line-height: 11px;
}
.times {
  display: flex;
  grid-column: 1 / -1;
  overflow: hidden;
  white-space: nowrap;
}
.times span {
  flex: 0 0 64px;
  padding-top: 4px;
  line-height: 11px;
  background: linear-gradient(#fff, #fff) 1px 0 / 1px 3px no-repeat;
}
.charttabs {
  height: 22px;
  margin-top: 2px;
  padding-left: 2px;
}
.charttabs button {
  padding: 0 10px;
}
.charttabs svg {
  margin: 6px 7px 0 auto;
}

/* tester */
.tester {
  display: flex;
  flex: none;
  height: 263px;
  padding-top: 1px;
  border-top: 1px solid #fff;
}
.rail {
  display: flex;
  flex: none;
  flex-direction: column;
  width: 15px;
  padding: 0 1px 2px;
}
.rail button {
  height: 14px;
  font: bold 12px/12px var(--small);
}
.rail span {
  flex: 1;
  padding-top: 3px;
  background: linear-gradient(0deg, #383838, #5c5c5c);
  color: #a0a0a0;
  font: 11px/13px var(--small);
  text-align: left;
  writing-mode: vertical-rl;
  transform: rotate(180deg);
}
.body {
  display: flex;
  flex: 1;
  flex-direction: column;
  min-width: 0;
  margin-right: 2px;
}
.form {
  display: flex;
  flex: 1;
  flex-direction: column;
  gap: 6px;
  padding: 4px 5px 2px 2px;
  border: 1px solid var(--line);
  border-right-color: #fff;
  border-bottom: 0;
  background: #fff;
}
.row {
  display: flex;
  align-items: center;
  height: 22px;
}
.row.foot {
  margin-top: auto;
}
.lab {
  flex: none;
  width: 119px;
  margin-right: 3px;
  color: #aaa69c;
  text-align: right;
}
.lab.mid {
  width: 100px;
}
.lab.tick,
.lab.push {
  width: 116px;
  margin-right: 4px;
}
.lab.push {
  margin-left: auto;
}
.lab.from {
  width: 88px;
  margin-right: 4px;
}
.lab.to {
  width: 91px;
  margin-right: 4px;
}
.combo {
  display: flex;
  height: 21px;
  margin-right: 2px;
  border: 1px solid #b4b4b0;
  color: #6c6c6c;
}
.combo.grow {
  flex: 1;
  min-width: 0;
}
.combo.small {
  flex: none;
  width: 90px;
}
.combo select {
  flex: 1;
  min-width: 0;
  padding-left: 3px;
  appearance: none;
  color: #6c6c6c;
  opacity: 1;
}
.combo i,
.date i {
  display: flex;
  flex: none;
  align-items: center;
  justify-content: center;
  width: 17px;
  border-left: 1px solid #b4b4b0;
  background: linear-gradient(#fff, #e8e8e6);
  box-shadow: inset 0 0 0 1px #fff;
}
.combo i::after,
.date i::after {
  content: '';
  border: 4px solid transparent;
  border-top-color: #b8b8b4;
  border-bottom: 0;
}
.picked div {
  flex: 1;
  height: 15px;
  margin: 2px 3px 2px 2px;
  background: #ededeb;
}
.picked select {
  display: block;
  height: 13px;
  padding: 0 1px;
  background: #0f82fa;
  color: #b8b4a8;
  font: 11px/13px Roboto, sans-serif;
  field-sizing: content;
}
.btn {
  flex: none;
  width: 150px;
  height: 21px;
  border: 1px solid #98989a;
  background: #ededeb;
  color: #000;
}
.btn:disabled {
  color: #a9a69c;
}
input[type='checkbox'] {
  flex: none;
  width: 15px;
  height: 15px;
  margin-right: 4px;
  appearance: none;
  border: 1px solid #8c8c8c;
  background: #fff;
}
input[type='checkbox']:checked::after {
  content: '';
  display: block;
  width: 3px;
  height: 6px;
  margin: 2px 0 0 4px;
  border: solid #000;
  border-width: 0 2px 2px 0;
  transform: rotate(45deg);
}
.date {
  display: flex;
  flex: none;
  width: 90px;
  height: 22px;
  border: 1px solid #dcdce4;
  border-right-color: #b4b4b0;
}
.date input {
  flex: 1;
  min-width: 0;
  padding-left: 1px;
}
.date.off input {
  color: #6c6c6c;
}
.date i {
  background: #c4c6c4;
}
.date.off i {
  background: linear-gradient(#fff, #e8e8e6);
}
.date:not(.off) i::after {
  border-top-color: #888;
}
.speed {
  width: 103px;
  height: 19px;
  margin: 0 10px 0 9px;
  appearance: none;
}
.speed::-webkit-slider-runnable-track {
  height: 10px;
  border: 1px solid #98989a;
  background: #fff;
}
.speed::-webkit-slider-thumb {
  width: 9px;
  height: 20px;
  margin-top: -6px;
  appearance: none;
  border: 1px solid #98989a;
  background: #e4e4e4;
}
.btn.pause {
  display: flex;
  align-items: center;
  justify-content: center;
  gap: 3px;
  width: 25px;
  margin-right: 6px;
}
.pause i {
  width: 2px;
  height: 10px;
  background: linear-gradient(90deg, #d89a6a 50%, #5aa0e8 50%);
}
.btn.skip {
  width: 120px;
  margin-right: 4px;
}
progress {
  flex: 1;
  height: 16px;
  margin-right: 2px;
  appearance: none;
  border: 0;
  background: none;
}
progress::-webkit-progress-bar {
  background: linear-gradient(#d4d4d2, #fff);
}
progress::-webkit-progress-value {
  border: 1px solid #0a5ab0;
  background: linear-gradient(#3f98ea, #1468c4);
}
.btn.stop {
  font: bold 12px/14px Roboto, sans-serif;
}
.tester .tabs {
  height: 22px;
}
.tester .tabs button {
  padding: 0 11px;
}
.tester .tabs .active {
  margin-right: -2px;
  padding: 0 9px;
}

/* status bar */
.status {
  display: flex;
  flex: none;
  align-items: center;
  height: 21px;
  padding-top: 3px;
  border-top: 1px solid var(--line);
  font: 10px/14px var(--small);
}
.status span {
  flex: none;
  height: 16px;
  padding-left: 5px;
  border-left: 1px solid var(--line);
  line-height: 16px;
}
.status .hint {
  flex: 1;
  padding-left: 2px;
  border: 0;
}
.w1 {
  width: 121px;
}
.w2 {
  width: 114px;
}
.w3 {
  width: 77px;
}
.w4 {
  width: 73px;
}
.status .net {
  display: flex;
  align-items: center;
  gap: 52px;
  width: 161px;
}
.net em {
  font-style: normal;
}
</style>
